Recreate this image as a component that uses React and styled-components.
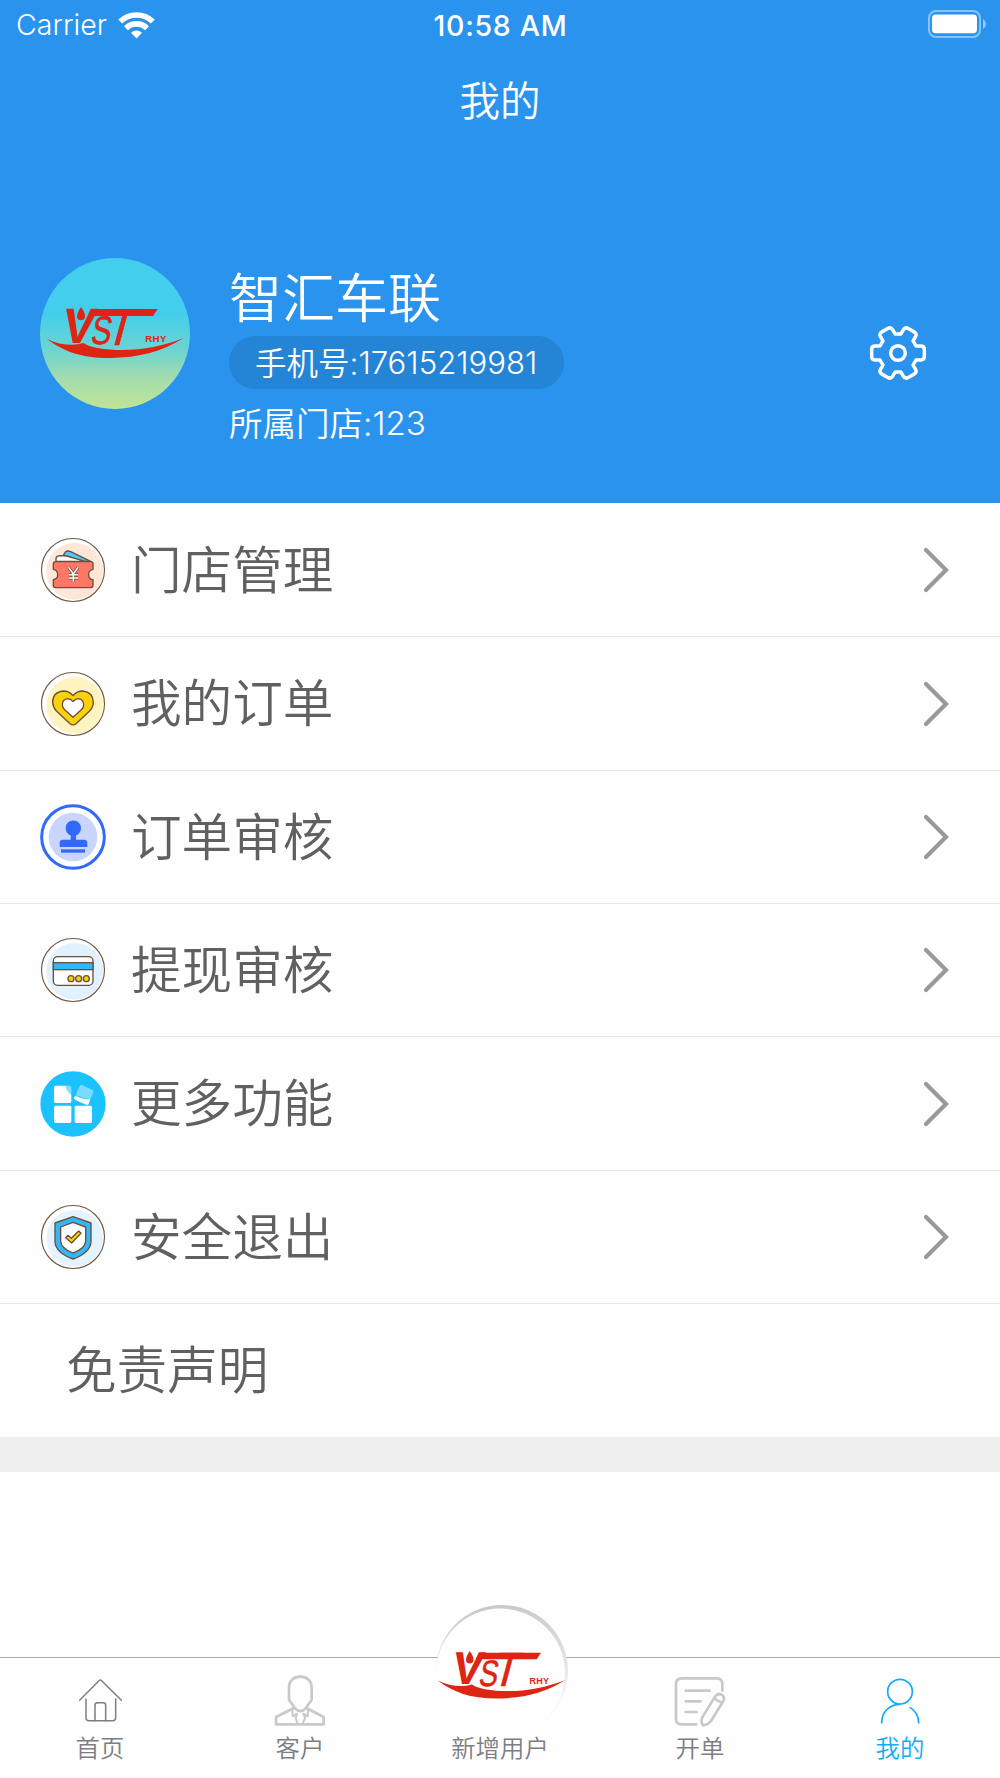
import React from 'react';
import styled, { createGlobalStyle } from 'styled-components';

const GlobalStyle = createGlobalStyle`
  * {
    box-sizing: border-box;
  }

  body {
    margin: 0;
    background: #fefefe;
    font-family: Inter, 'Noto Sans CJK SC', sans-serif;
    font-weight: 350;
  }

  svg {
    display: block;
    flex: none;
  }
`;

const Logo = () => (
  <g fill="#de2413" fontFamily="Liberation Sans">
    <path d="M212 206 H413 L399 227 H203 Z" />
    <path d="M183 200 Q196 218 195 228 A12 12 0 0 1 171 228 Q171 218 183 200 Z" />
    <text transform="translate(119 308) skewX(-10)" fontWeight="700" fontSize="149">
      V
    </text>
    <text transform="translate(209 312) skewX(-10) scale(.76 1)" fontSize="119" fontWeight="400" stroke="#de2413" strokeWidth="2">
      S
    </text>
    <text transform="translate(248 314) skewX(-15) scale(.9 1)" fontSize="154" fontWeight="400" stroke="#de2413" strokeWidth="2">
      T
    </text>
    <text x="376" y="305" fontWeight="700" fontSize="29" textLength="63">
      RHY
    </text>
    <path d="M80 295 C105 308 130 313 155 313 Q175 313 190 308 Q205 318 232 323 C320 338 410 325 489 294 C430 333 355 353 270 353 C185 353 130 333 80 295 Z" />
  </g>
);

// one tooth of the settings cog, repeated every 60 degrees
const tooth = [
  ['L', 54, -21],
  ['L', 69, -21],
  ['Q', 79, -21, 79, -10],
  ['L', 79, 10],
  ['Q', 79, 21, 69, 21],
  ['L', 54, 21],
];

const cogPath = [0, 1, 2, 3, 4, 5]
  .map((n) => {
    const a = (n * Math.PI) / 3;
    return tooth
      .map(([cmd, ...pts]) => {
        const out = [];
        for (let i = 0; i < pts.length; i += 2) {
          out.push((pts[i] * Math.cos(a) - pts[i + 1] * Math.sin(a)).toFixed(1));
          out.push((pts[i] * Math.sin(a) + pts[i + 1] * Math.cos(a)).toFixed(1));
        }
        return cmd + out.join(' ');
      })
      .join(' ');
  })
  .join(' ')
  .replace('L', 'M');

const CogIcon = () => (
  <svg width="60" height="60" viewBox="-90 -90 180 180" fill="none" stroke="#fff" strokeWidth="10.5" strokeLinejoin="round">
    <path d={`${cogPath} Z`} />
    <circle r="22" />
  </svg>
);

const WifiIcon = () => (
  <svg width="37" height="28" viewBox="0 0 37 28" fill="none" stroke="#fff" strokeWidth="5.6">
    <path d="M2.2 10.5 A23.5 23.5 0 0 1 34.8 10.5" />
    <path d="M8 17.2 A15 15 0 0 1 29 17.2" />
    <path d="M18.5 27.5 L13 21.8 Q18.5 17.2 24 21.8 Z" fill="#fff" stroke="none" />
  </svg>
);

const BatteryIcon = () => (
  <svg width="60" height="28" viewBox="0 0 60 28">
    <rect x="1" y="1" width="51" height="26" rx="7" fill="none" stroke="#fff" strokeOpacity=".45" strokeWidth="2" />
    <rect x="4" y="4.6" width="45" height="18.6" rx="3.6" fill="#fff" />
    <path d="M55 9 Q58 11 58 14 T55 19 Z" fill="#fff" fillOpacity=".5" />
  </svg>
);

const Ring = ({ cy, tint, dx = 5 }) => (
  <>
    <circle cx="159" cy={cy} r="94.5" fill="#fff" stroke="#6f5a43" strokeWidth="3.4" />
    <circle cx={159 + dx} cy={cy + 4} r="85" fill={tint} />
  </>
);

const brown = '#65513c';

const TicketIcon = () => (
  <svg width="66" height="66" viewBox="60 80 198 198" strokeLinejoin="round">
    <Ring cy={179} tint="#fee6d9" />
    <g stroke={brown} strokeWidth="4">
      <path d="M130 135 L137 124 Q143 120 152 124 L212 153 H180 Z" fill="#55c6f5" />
      <path d="M108 153 V144 Q110 136 120 136 L140 137 L196 153 Z" fill="#fff" />
      <path
        d="M107 154 H213 Q219 154 219 160 V177 Q206 179 206 193 T219 208 V225 Q219 232 213 232 H107 Q100 232 100 225 V208 Q113 206 113 193 T100 177 V160 Q100 154 107 154 Z"
        fill="#ff7765"
      />
      <path
        d="M146 171 L160 191 L174 171 M160 191 V214 M146 193 H174 M146 203 H174"
        fill="none"
        strokeWidth="9"
      />
      <path
        d="M146 171 L160 191 L174 171 M160 191 V214 M146 193 H174 M146 203 H174"
        fill="none"
        stroke="#fff"
        strokeWidth="4.5"
      />
    </g>
  </svg>
);

const HeartIcon = () => (
  <svg width="66" height="66" viewBox="60 481 198 198" strokeLinejoin="round">
    <Ring cy={580} tint="#fff3c2" dx={6} />
    <g stroke={brown} strokeWidth="4">
      <path
        d="M159 555 Q147 541 130 541 Q98 544 98 575 Q99 590 110 602 L150 639 Q159 646 168 639 L208 602 Q220 590 220 575 Q219 544 188 541 Q171 541 159 555 Z"
        fill="#fdd107"
      />
      <path
        d="M159 573 Q152 564 143 564 Q127 566 127 582 Q127 590 134 597 L159 620 L184 597 Q191 590 191 582 Q190 566 175 564 Q166 564 159 573 Z"
        fill="#fff"
      />
    </g>
  </svg>
);

const StampIcon = () => (
  <svg width="66" height="66" viewBox="60 71 198 198" fill="#3169fa">
    <circle cx="159" cy="170" r="94" fill="#fff" stroke="#3169fa" strokeWidth="9" />
    <circle cx="159" cy="170" r="73" fill="#c8d6fd" />
    <path d="M152 178 V165 A23 23 0 1 1 168 165 V178 H192 Q202 178 202 188 V200 H119 V188 Q119 178 129 178 Z" />
    <rect x="123" y="207" width="72" height="10" />
  </svg>
);

const CardIcon = () => (
  <svg width="66" height="66" viewBox="60 473 198 198">
    <Ring cy={572} tint="#e1f1fd" />
    <rect x="100" y="532" width="119" height="86" rx="13" fill="#fff" stroke={brown} strokeWidth="4" />
    <rect x="100" y="550" width="119" height="21" fill="#35b6f9" stroke={brown} strokeWidth="4" />
    <g fill="#fcd000" stroke={brown} strokeWidth="4">
      <circle cx="153" cy="598" r="9" />
      <circle cx="176" cy="598" r="9" />
      <circle cx="199" cy="598" r="9" />
    </g>
  </svg>
);

const TilesIcon = () => (
  <svg width="66" height="66" viewBox="60 64 198 198" fill="#fff">
    <circle cx="159" cy="163" r="98" fill="#1cc2ff" />
    <path d="M107 108 H137 Q138 124 154 135 V155 Q154 160 149 160 H107 Q102 160 102 155 V113 Q102 108 107 108 Z" />
    <path d="M137 108 H149 Q154 109 154 114 V135 Q138 124 137 108 Z" fillOpacity=".45" />
    <rect x="102" y="168" width="52" height="52" rx="5" />
    <rect x="164" y="168" width="52" height="52" rx="5" />
    <path d="M186 106 L218 121 Q222 124 220 128 L211 149 Q190 146 167 137 L179 109 Q182 105 186 106 Z" fillOpacity=".42" />
    <path d="M166 138 Q188 149 211 149 L206 162 Q203 167 198 165 L165 150 Q160 147 162 143 Z" />
  </svg>
);

const ShieldIcon = () => (
  <svg width="66" height="66" viewBox="60 462 198 198" strokeLinejoin="round">
    <Ring cy={561} tint="#e5f3fe" />
    <g stroke={brown} strokeWidth="4">
      <path d="M159 500 L213 519 V575 Q211 608 159 627 Q107 608 105 575 V519 Z" fill="#35b6f9" />
      <path d="M159 517 L197 531 V574 Q195 596 159 609 Q124 596 122 574 V531 Z" fill="#fff" />
      <path d="M137 563 L144 556 L154 565 L176 543 L183 550 L155 579 Z" fill="#fdd107" />
    </g>
  </svg>
);

const Chevron = () => (
  <svg
    width="28"
    height="46"
    viewBox="0 0 28 46"
    fill="none"
    stroke="#999"
    strokeWidth="4.2"
    strokeLinecap="round"
  >
    <path d="M4 3 L24 23 L4 43" />
  </svg>
);

const HomeIcon = () => (
  <svg width="56" height="55" viewBox="96 100 168 165" fill="none" stroke="#7b7f85" strokeWidth="4.5" strokeLinecap="round">
    <path d="M119 182 L177 123 Q181 119 185 123 L244 182" />
    <path d="M138 178 V234 Q138 243 147 243 H218 Q227 243 227 234 V178" />
    <path d="M165 243 V196 Q165 189 172 189 H190 Q197 189 197 196 V243" />
  </svg>
);

const ClientIcon = () => (
  <svg width="56" height="55" viewBox="696 100 168 165" fill="none" stroke="#c8c9cb" strokeWidth="8" strokeLinejoin="round">
    <path d="M747 180 V145 C747 123 762 111 781 111 S815 123 815 145 V180 L796 207 Q781 222 766 207 Z" />
    <path d="M762 205 L708 232 V254 H851 V232 L799 205" />
    <path d="M757 211 L758 230 L771 222 L767 235 L773 252 M804 211 L803 230 L790 222 L795 235 L788 252" strokeWidth="6" />
  </svg>
);

const BillIcon = () => (
  <svg
    width="56"
    height="55"
    viewBox="96 100 168 165"
    fill="none"
    stroke="#c8c9cb"
    strokeWidth="8"
    strokeLinecap="round"
    strokeLinejoin="round"
  >
    <path d="M169 254 H126 Q108 254 108 237 V133 Q108 116 126 116 H230 Q247 116 247 133 V153" />
    <path d="M137 153 H209 M137 185 H182 M137 217 H170" />
    <path d="M225 171 Q234 158 246 166 Q256 173 250 184 L213 244 Q205 255 190 257 Q181 250 187 233 Z M222 176 L246 190" />
  </svg>
);

const MeIcon = () => (
  <svg width="56" height="55" viewBox="696 100 168 165" fill="none" stroke="#14abfb" strokeWidth="5" strokeLinecap="round">
    <circle cx="780" cy="156" r="37" />
    <path d="M725 250 C725 215 750 194 780 194 M811 204 C828 215 836 232 836 250" />
  </svg>
);

const rows = [
  { label: '门店管理', Icon: TicketIcon },
  { label: '我的订单', Icon: HeartIcon },
  { label: '订单审核', Icon: StampIcon },
  { label: '提现审核', Icon: CardIcon },
  { label: '更多功能', Icon: TilesIcon },
  { label: '安全退出', Icon: ShieldIcon },
];

const App = () => (
  <Page>
    <GlobalStyle />
    <Header>
      <StatusBar>
        <Carrier>
          Carrier <WifiIcon />
        </Carrier>
        <Clock>10:58 AM</Clock>
        <BatteryIcon />
      </StatusBar>
      <Title>我的</Title>
      <Profile>
        <Avatar>
          <svg width="150" height="151" viewBox="60 53 450 453">
            <Logo />
          </svg>
        </Avatar>
        <Info>
          <Name>智汇车联</Name>
          <Phone>
            手机号:<Digits>17615219981</Digits>
          </Phone>
          <Store>
            所属门店:<Digits>123</Digits>
          </Store>
        </Info>
        <Settings>
          <CogIcon />
        </Settings>
      </Profile>
    </Header>
    <Menu>
      {rows.map(({ label, Icon }) => (
        <Row key={label}>
          <Icon />
          <RowLabel>{label}</RowLabel>
          <Chevron />
        </Row>
      ))}
      <Row $plain>
        <RowLabel>免责声明</RowLabel>
      </Row>
      <Gap />
    </Menu>
    <TabBar>
      <Tab>
        <HomeIcon />
        首页
      </Tab>
      <Tab>
        <ClientIcon />
        客户
      </Tab>
      <Tab>
        <TabSpace />
        新增用户
        <AddButton>
          <svg width="134" height="136" viewBox="0 0 134 136">
            <defs>
              <linearGradient id="rim" x1="0" y1="0" x2="0" y2="1">
                <stop offset="0" stopColor="#c9c9c9" />
                <stop offset=".35" stopColor="#dedede" />
                <stop offset=".7" stopColor="#f6f6f6" />
                <stop offset="1" stopColor="#fefefe" />
              </linearGradient>
            </defs>
            <circle cx="67" cy="67" r="66" fill="url(#rim)" />
            <circle cx="65.5" cy="69" r="64.5" fill="#fefefe" />
            <g transform="translate(-22 -15) scale(.31 .31)">
              <Logo />
            </g>
          </svg>
        </AddButton>
      </Tab>
      <Tab>
        <BillIcon />
        开单
      </Tab>
      <Tab $active>
        <MeIcon />
        我的
      </Tab>
    </TabBar>
  </Page>
);

const Page = styled.div`
  display: flex;
  flex-direction: column;
  width: 1000px;
  height: 1778px;
  overflow: hidden;
`;

const Header = styled.header`
  height: 503px;
  background: #2993ee;
  color: #fff;
`;

const StatusBar = styled.div`
  display: grid;
  grid-template-columns: 1fr auto 1fr;
  align-items: center;
  height: 50px;
  padding: 0 12px 2px 16px;

  > :last-child {
    justify-self: end;
  }
`;

const Carrier = styled.div`
  display: flex;
  align-items: center;
  gap: 11px;
  font-size: 28.5px;
  line-height: 36px;
  padding-top: 2px;
`;

const Clock = styled.div`
  padding-top: 2px;
  font-size: 28.5px;
  font-weight: 500;
  letter-spacing: 0.7px;
  transform: translateX(-1.5px);
`;

const Title = styled.h1`
  margin: 0;
  height: 102px;
  font-size: 40.5px;
  line-height: 103px;
  font-weight: 350;
  text-align: center;
`;

const Profile = styled.section`
  display: flex;
  align-items: flex-start;
  padding: 106px 72px 0 40px;
`;

const Avatar = styled.div`
  width: 150px;
  height: 151px;
  border-radius: 50%;
  overflow: hidden;
  background: linear-gradient(#42ceec 0%, #42ceec 36%, #6bd4d2 60%, #a3dcae 80%, #c1e593 100%);
`;

const Info = styled.div`
  flex: 1;
  margin: 8px 0 0 39px;
`;

const Settings = styled.div`
  margin-top: 65px;
`;

const Name = styled.div`
  height: 70px;
  font-size: 53px;
  line-height: 66px;
`;

const Phone = styled.div`
  display: flex;
  align-items: center;
  width: fit-content;
  height: 53px;
  padding: 0 27px 3px 26px;
  border-radius: 27px;
  background: #2484d6;
  font-size: 31.5px;
`;

const Store = styled.div`
  display: flex;
  align-items: center;
  height: 64px;
  font-size: 33.5px;
`;

const Digits = styled.span`
  margin-top: 3px;
  font-size: 0.99em;
`;

const Menu = styled.main`
  padding-top: 0.8px;
`;

const Row = styled.div`
  display: flex;
  align-items: center;
  height: ${({ $plain }) => ($plain ? '132.8px' : '133.4px')};
  padding: ${({ $plain }) => ($plain ? '0 50px 0 66px' : '0.6px 50px 0 40px')};
  border-bottom: ${({ $plain }) => ($plain ? 'none' : '1.5px solid #e6e6e6')};
`;

const RowLabel = styled.div`
  flex: 1;
  padding-top: 1px;
  color: #606060;
  font-size: 50.6px;
  line-height: 70px;

  svg + & {
    margin-left: 25px;
  }
`;

const Gap = styled.div`
  height: 35px;
  background: #efefef;
`;

const TabBar = styled.nav`
  display: grid;
  grid-template-columns: repeat(5, 1fr);
  height: 121px;
  margin-top: auto;
  border-top: 1px solid #a9abad;
`;

const Tab = styled.div`
  position: relative;
  display: flex;
  flex-direction: column;
  align-items: center;
  padding-top: 15px;
  color: ${({ $active }) => ($active ? '#14abfb' : '#7b7f85')};
  font-size: 24.4px;
  line-height: 40px;
`;

const TabSpace = styled.div`
  height: 55px;
`;

const AddButton = styled.div`
  position: absolute;
  top: -54px;
  left: 35px;
`;

export default App;
